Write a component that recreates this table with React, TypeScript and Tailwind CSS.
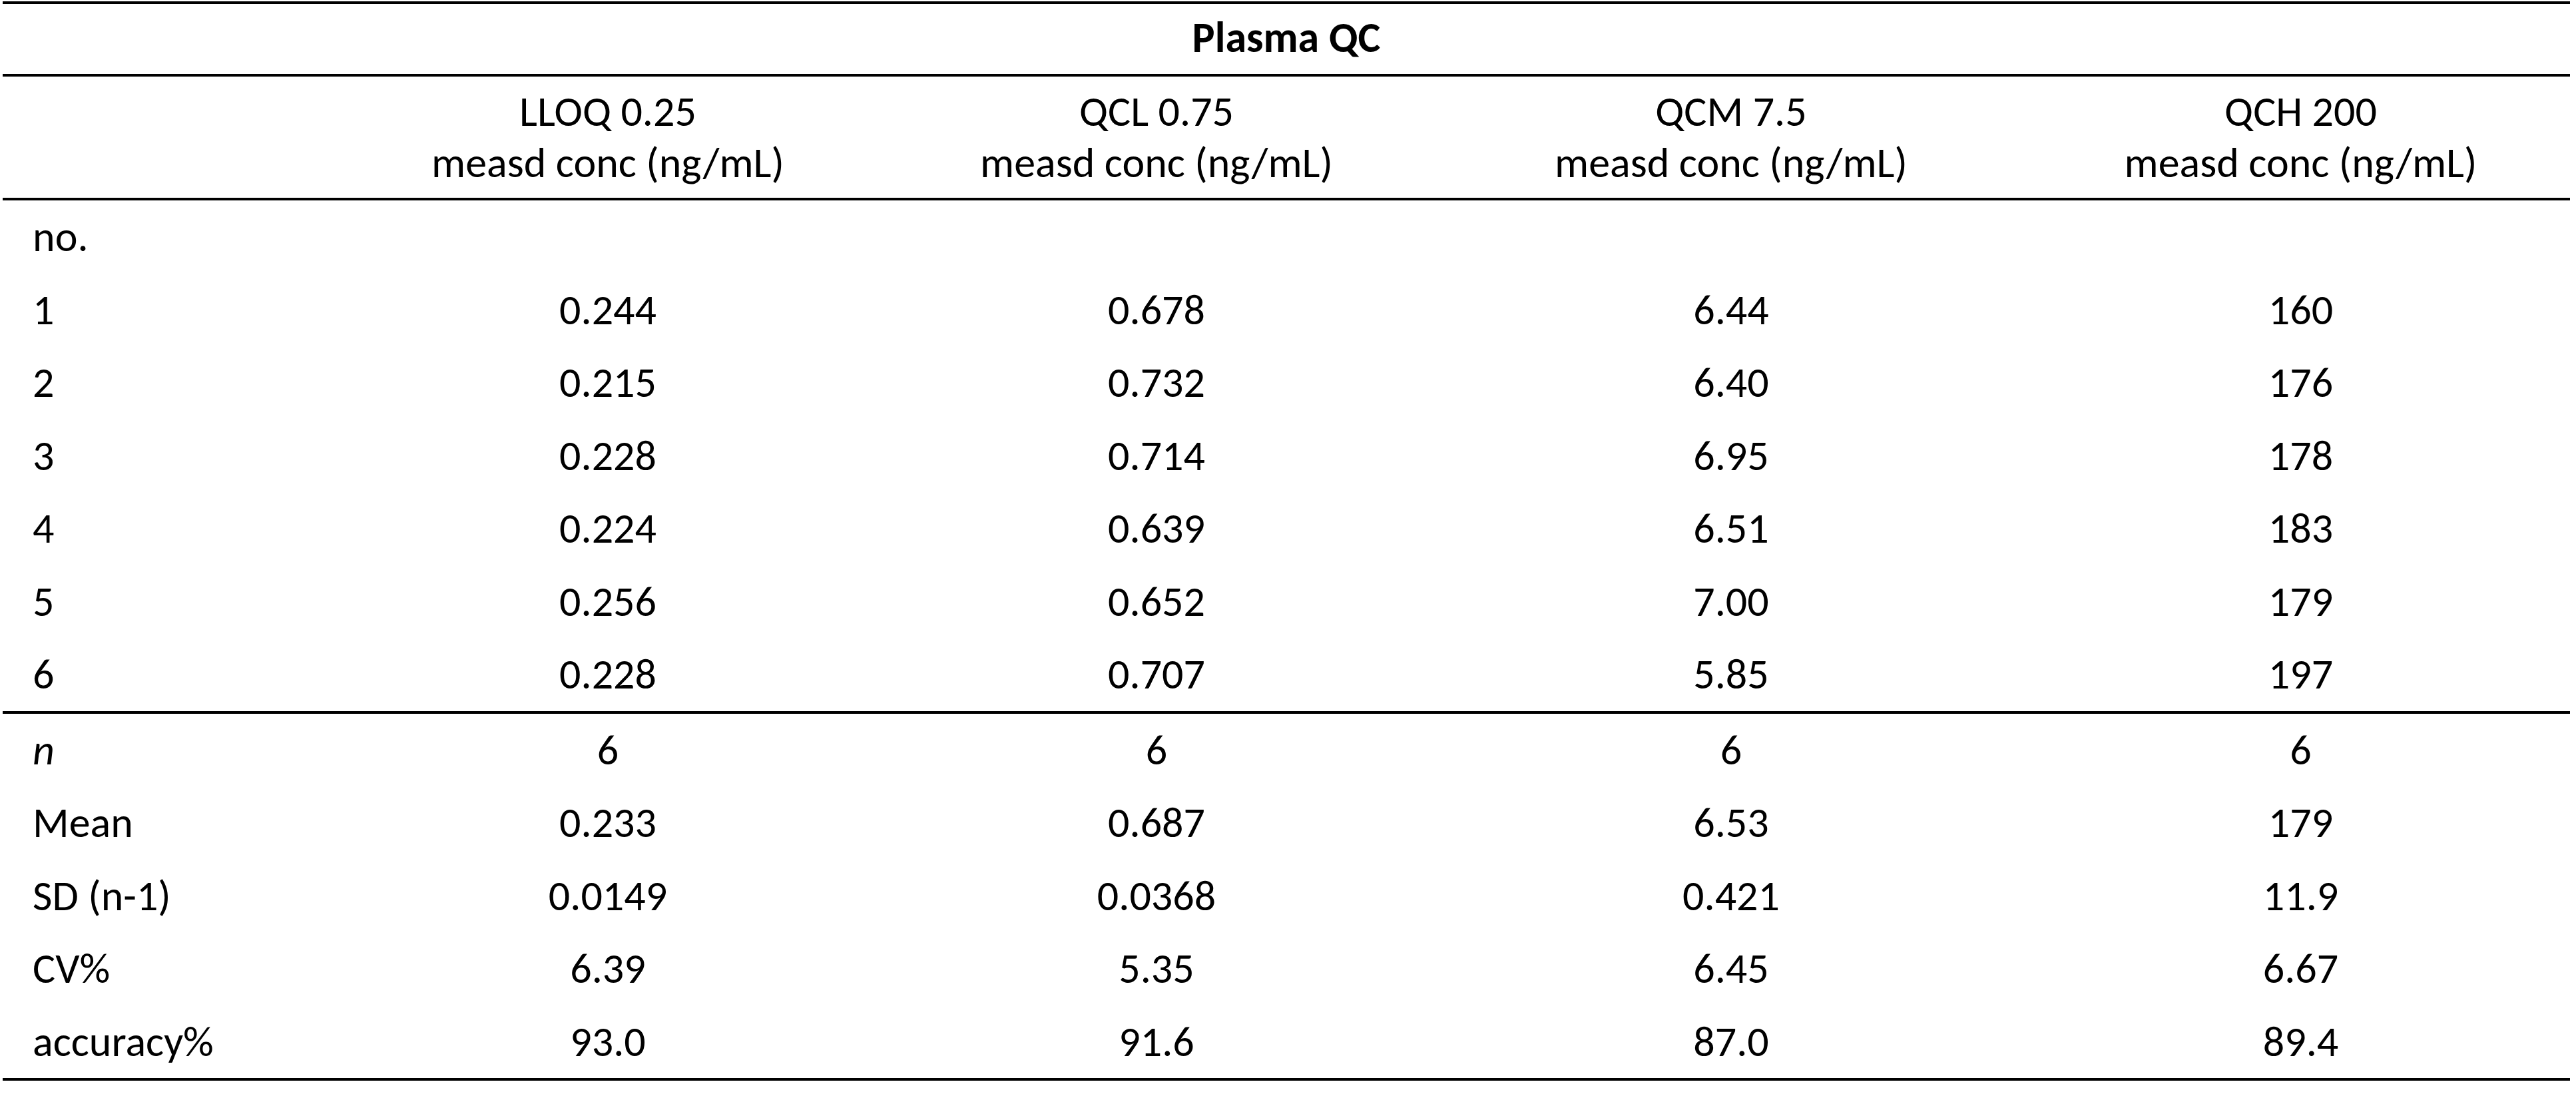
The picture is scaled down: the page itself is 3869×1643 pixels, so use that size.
import React from "react";

const cols = "grid grid-cols-[497px_824px_824px_902px_1fr] items-center";

const heads = ["LLOQ 0.25", "QCL 0.75", "QCM 7.5", "QCH 200"];

const runs = [
  ["1", "0.244", "0.678", "6.44", "160"],
  ["2", "0.215", "0.732", "6.40", "176"],
  ["3", "0.228", "0.714", "6.95", "178"],
  ["4", "0.224", "0.639", "6.51", "183"],
  ["5", "0.256", "0.652", "7.00", "179"],
  ["6", "0.228", "0.707", "5.85", "197"],
];

const stats = [
  ["n", "6", "6", "6", "6"],
  ["Mean", "0.233", "0.687", "6.53", "179"],
  ["SD (n-1)", "0.0149", "0.0368", "0.421", "11.9"],
  ["CV%", "6.39", "5.35", "6.45", "6.67"],
  ["accuracy%", "93.0", "91.6", "87.0", "89.4"],
];

const Row = ({ cells, italic }: { cells: string[]; italic?: boolean }) => (
  <div className={`${cols} h-[109.5px]`}>
    <div className={`pl-[45px] ${italic ? "italic" : ""}`}>{cells[0]}</div>
    {cells.slice(1).map((c, i) => (
      <div key={i} className="text-center">
        {c}
      </div>
    ))}
  </div>
);

export default function App() {
  return (
    <div className="min-h-screen bg-white pt-[2px]">
      <div
        className="ml-[4px] w-[3856px] text-black text-[64px] leading-[1.2]"
        style={{ fontFamily: "Carlito, Calibri, Lato, 'Liberation Sans', sans-serif" }}
      >
        {/* title */}
        <div className="border-t-4 border-b-4 border-black h-[113px] flex items-center justify-center pb-[4px]">
          <span className="font-bold">Plasma QC</span>
        </div>

        {/* column heads */}
        <div className={`${cols} h-[186px] border-b-4 border-black`}>
          <div />
          {heads.map((h) => (
            <div key={h} className="text-center">
              <div>{h}</div>
              <div>measd conc (ng/mL)</div>
            </div>
          ))}
        </div>

        <div className={`${cols} h-[109.5px]`}>
          <div className="pl-[45px]">no.</div>
        </div>
        {runs.map((r) => (
          <Row key={r[0]} cells={r} />
        ))}

        <div className="border-t-4 border-black">
          {stats.map((r) => (
            <Row key={r[0]} cells={r} italic={r[0] === "n"} />
          ))}
        </div>
        <div className="border-t-4 border-black" />
      </div>
    </div>
  );
}
